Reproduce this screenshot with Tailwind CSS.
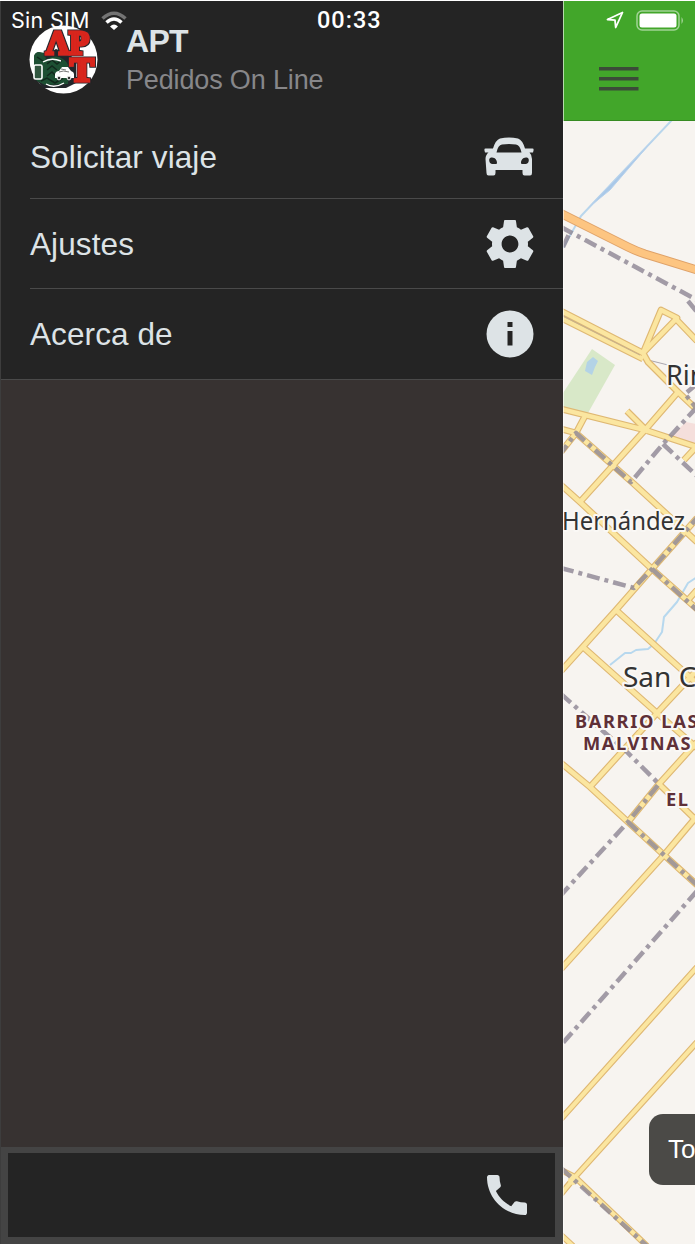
<!DOCTYPE html>
<html lang="es">
<head>
  <meta charset="UTF-8">
  <title>APT - Pedidos On Line</title>
  <script src="https://cdn.jsdelivr.net/npm/@tailwindcss/browser@4"></script>
</head>
<body class="bg-white font-['Liberation_Sans',sans-serif] overflow-hidden">

  <div class="relative flex w-[695px] h-[1244px] pt-px overflow-hidden">

    <!-- Menú lateral -->
    <aside class="w-[563px] shrink-0 flex flex-col bg-[#373231] border-l border-[#3d3d3d]">
      <div class="bg-[#242424] border-b border-[#4a4a4a] h-[379px] shrink-0">
        <header class="flex h-[115px] pl-7 pt-[23px]">
          <svg class="w-[70px] h-[70px] shrink-0" viewBox="0 0 70 70">
            <defs>
              <filter id="contorno" x="-20%" y="-20%" width="140%" height="140%">
                <feMorphology in="SourceAlpha" operator="dilate" radius="1" result="borde"/>
                <feFlood flood-color="#26282c"/>
                <feComposite in2="borde" operator="in"/>
                <feMerge><feMergeNode/><feMergeNode in="SourceGraphic"/></feMerge>
              </filter>
            </defs>
            <circle cx="34.500" cy="35.500" r="34" fill="#fff"/>
            <path d="M5 32l4-4 8 2 10-5 12 4 8 8 0 22-10 5H14l-4-5-4-3z" fill="#22262a"/>
            <path d="M5 32q1-4 5-4l6 1 1 7q9-7 17-1 7 5 6 13l-1 12-23 1-8-4-3-5z" fill="#1d4f33"/>
            <path d="M8 33l6 4M18 40l5-4 5 4 5-4M18 46l5-4 5 4M18 52l5-4 4 4M12 57l6-3 8 5 8-5" stroke="#12281d" stroke-width="1.500" fill="none"/>
            <g font-family="Liberation Serif" font-weight="700" fill="#d8251f" stroke="#d8251f" stroke-width="3" filter="url(#contorno)">
              <text x="17" y="30" font-size="33" textLength="43" lengthAdjust="spacingAndGlyphs">ΛP</text>
              <text x="41" y="57" font-size="34" textLength="24" lengthAdjust="spacingAndGlyphs">T</text>
            </g>
            <rect x="5" y="41" width="8" height="14" rx="1.500" fill="#31563f" stroke="#fff" stroke-width="1.600"/>
            <path d="M14 38q8-5 18-1M17 60q8 5 18-1" stroke="#fff" stroke-width="1.400" fill="none"/>
            <path d="M26 54v-4q1-3 4-3l3-4h6l3 4q3 1 3 3v4z" fill="#fff"/>
            <path d="M30 48q4-2 10 0M32 45l5 1" stroke="#555" stroke-width=".8" fill="none"/>
            <circle cx="30" cy="54" r="1.900" fill="#333" stroke="#fff"/><circle cx="40" cy="54" r="1.900" fill="#333" stroke="#fff"/>
          </svg>
          <div class="pl-[27px] pt-px">
            <h1 class="text-[32px] leading-[32px] tracking-[-0.7px] font-bold text-[#dde3e6]">APT</h1>
            <p class="pt-[8px] text-[27px] leading-[30px] tracking-[-0.15px] text-[#87878a] whitespace-nowrap">Pedidos On Line</p>
          </div>
        </header>

        <nav class="pl-[29px] text-[31.5px] tracking-[0.1px] text-[#dde3e6]">
          <div class="flex items-center justify-between h-[83px] pr-[29px] border-b border-[#4a4a4a]">
            <span class="pt-0.5">Solicitar viaje</span>
            <svg class="w-[50px] h-[40px]" viewBox="0 0 50 40" fill="#dde3e6">
              <path fill-rule="evenodd" d="M16 1.500Q25-.5 34 1.500Q38.500 3 41 11.500H48.500Q50 11.500 49.500 13.500L49 15.500H45.500Q48 18 48 22V36Q48 38.500 46 38.500H40.500Q38.500 38.500 38.500 36V33H11.500V36Q11.500 38.500 9.500 38.500H4.500Q2.500 38.500 2.500 36L1.500 22Q1.500 18 4.500 15.500H1L.5 13.500Q0 11.500 1.500 11.500H9Q11.500 3 16 1.500zM18 7.500Q14 8 12.500 15.500H37.500Q36 8 32 7.500Q25 6.500 18 7.500zM7 20.500C4 21.500 5 26.500 8 27H12.500C14 25.500 12 19.500 7 20.500zM43 20.500C38 19.500 36 25.500 37.500 27H42C45 26.500 46 21.500 43 20.500z"/>
            </svg>
          </div>
          <div class="flex items-center justify-between h-[90px] pr-[29px] border-b border-[#4a4a4a]">
            <span class="pt-0.5">Ajustes</span>
            <svg class="w-[48px] h-[48px]" viewBox="2.200 2 19.600 20" fill="#dde3e6">
              <path d="M19.430 12.980c.04-.32.07-.64.07-.98s-.03-.66-.07-.98l2.110-1.650c.19-.15.24-.42.12-.64l-2-3.460c-.12-.22-.39-.3-.61-.22l-2.490 1c-.52-.4-1.080-.73-1.690-.98l-.38-2.650C14.460 2.180 14.250 2 14 2h-4c-.25 0-.46.18-.49.42l-.38 2.650c-.61.25-1.170.59-1.690.98l-2.490-1c-.23-.09-.49 0-.61.22l-2 3.460c-.13.22-.07.49.12.64l2.110 1.650c-.04.32-.07.65-.07.98s.03.66.07.98l-2.110 1.650c-.19.15-.24.42-.12.64l2 3.460c.12.22.39.3.61.22l2.490-1c.52.4 1.080.73 1.690.98l.38 2.650c.03.24.24.42.49.42h4c.25 0 .46-.18.49-.42l.38-2.650c.61-.25 1.170-.59 1.690-.98l2.490 1c.23.09.49 0 .61-.22l2-3.460c.12-.22.07-.49-.12-.64l-2.110-1.650zM12 15.500c-1.930 0-3.500-1.570-3.500-3.500s1.570-3.500 3.500-3.500 3.500 1.570 3.500 3.500-1.570 3.500-3.500 3.500z"/>
            </svg>
          </div>
          <div class="flex items-center justify-between h-[90px] pr-[29px]">
            <span class="pt-0.5">Acerca de</span>
            <svg class="w-[48px] h-[48px]" viewBox="0 0 48 48">
              <circle cx="24" cy="24" r="23.500" fill="#dde3e6"/>
              <path d="M21.500 12h5v5h-5zM21.500 21h5v14.500h-5z" fill="#242424"/>
            </svg>
          </div>
        </nav>
      </div>

      <div class="mt-auto h-[97px] bg-[#242424] border-[#444444] border-l-[7px] border-t-[6px] border-r-8 border-b-[7px] flex items-center justify-end pr-[28px]">
        <svg class="w-[40px] h-[40px]" viewBox="3 3 18 18" fill="#dde3e6">
          <path d="M20.010 15.380c-1.230 0-2.420-.2-3.530-.56-.35-.12-.74-.03-1.010.24l-1.570 1.970c-2.830-1.350-5.480-3.900-6.890-6.830l1.950-1.660c.27-.28.35-.67.24-1.020-.37-1.110-.56-2.300-.56-3.530 0-.54-.45-.99-.99-.99H4.190C3.650 3 3 3.240 3 3.990 3 13.280 10.730 21 20.010 21c.71 0 .99-.63.99-1.180v-3.450c0-.54-.45-.99-.99-.99z"/>
        </svg>
      </div>
    </aside>

    <!-- Mapa -->
    <main class="relative flex-1 flex flex-col overflow-hidden">
      <div class="h-[120px] shrink-0 bg-[#42a62a] border-b border-[#368b22] pl-9 pt-[66px]">
        <svg class="w-[40px] h-[24px]" viewBox="0 0 40 24" fill="#3b4b38">
          <path d="M0 0h39.500v3.500H0zM0 10h39.500v3.500H0zM0 20h39.500v3.500H0z"/>
        </svg>
      </div>
      <svg class="w-[132px] h-[1123px]" viewBox="563 121 132 1123" fill="none" stroke-linejoin="round">
        <defs>
          <g id="calles">
            <path d="M561 311L643 353L648 362L678 392L695 408M561 318L643 359M643 353L661 310L677 318L643 353M675 318L697 341"/>
            <path d="M678 392L645 430L580 502M561 409L645 430L697 447M627 411L648 432M561 429L576 433L634 484L697 542M585 416L576 433L561 452M697 446L684 460"/>
            <path d="M561 485L580 502L652 569L697 609M697 518L652 569L616 610L561 671M616 610L692 679M583 647L657 713L697 748M697 670L657 713L590 787"/>
            <path d="M561 763L590 787L628 822L664 855L697 885M697 742L659 784L628 822M659 784L697 821M697 816L664 855L561 969M690 677L697 684M697 590L688 600"/>
          </g>
          <g id="caminos">
            <path d="M697 967L561 1119M697 1042L575 1177L561 1194M561 1170L575 1177L647 1246M561 1235L573 1246"/>
          </g>
        </defs>
        <rect x="563" y="121" width="132" height="1123" fill="#f7f4f0"/>
        <path d="M592 349L615 365L588 413L561 407V396z" fill="#d8e8c8"/>
        <path d="M593 357l5 4-3 6-3 8-7-4 2-9z" fill="#b3d3e6"/>
        <path d="M686 422L697 424V447L668 439z" fill="#f5dfdc"/>

        <!-- agua -->
        <path d="M672 120L581 216L563 248" stroke="#b9d6ec" stroke-width="2"/>
        <path d="M653 140L588 208L610 190z" fill="#a9c8e8" stroke="#b9d2ec"/>
        <path d="M697 577L688 583L677 602L664 617L662 632L654 644L648 649L636 650L631 653L625 653L610 665" stroke="#b7d8ee" stroke-width="2"/>
        <path d="M648 360L668 365" stroke="#aaa6ad" stroke-width="1"/>

        <!-- rutas -->
        <use href="#calles" stroke="#dfb873" stroke-width="6.800"/>
        <use href="#caminos" stroke="#dfb873" stroke-width="6.300"/>
        <use href="#calles" stroke="#fbe6a0" stroke-width="4.500"/>
        <use href="#caminos" stroke="#fbe6a0" stroke-width="4"/>
        <circle cx="573" cy="1180" r="5" fill="#fbe6a0"/>
        <path d="M561 315L640 355" stroke="#c9b189" stroke-width="1.200"/>
        <path d="M560 213L628 247Q636 251 645 254L697 270" stroke="#dfa269" stroke-width="9"/>
        <path d="M560 213L628 247Q636 251 645 254L697 270" stroke="#fdc581" stroke-width="7"/>

        <!-- límites -->
        <g stroke="#8f8795" stroke-opacity=".82" stroke-width="4.500" stroke-dasharray="13 5 4 5">
          <path d="M561 227L697 300M563 247L570 232M688 301L697 312"/>
          <path d="M697 407L663 444L631 482L576 433L561 453M697 384L685 394L697 409M663 444L697 476"/>
          <path d="M561 568L634 588L652 569L697 518M652 569L697 610"/>
          <path d="M561 694L604 732L625 750L659 784L628 822L561 895M628 822L664 855L697 885"/>
          <path d="M697 891L561 1045M561 1168L647 1246"/>
        </g>

        <!-- nombres -->
        <g font-family="Noto Sans" fill="#333" stroke="#faf8f5" stroke-width="4" paint-order="stroke">
          <text x="666" y="385" font-size="27">Rin</text>
          <text x="562" y="530" font-size="26" textLength="123" lengthAdjust="spacingAndGlyphs">Hernández</text>
          <text x="623" y="687" font-size="28">San C</text>
        </g>
        <g font-family="Noto Sans" font-weight="700" font-size="18.300" fill="#5f3038" stroke="#faf8f5" stroke-width="4" paint-order="stroke" letter-spacing="1.600">
          <text x="575" y="728">BARRIO LAS</text>
          <text x="583" y="750">MALVINAS</text>
          <text x="666" y="806">EL</text>
        </g>
      </svg>
      <div class="absolute left-[86px] top-[1113px] w-[120px] h-[71px] rounded-[14px] bg-[#4b4a47] text-white text-[26px] leading-[71px] pl-[19px]">To</div>
      <div class="absolute left-0 top-0 w-px h-full bg-white/60"></div>
    </main>

    <!-- Barra de estado -->
    <div class="absolute top-0 left-0 w-full h-10 flex items-center text-white font-['Inter',sans-serif]">
      <span class="pl-[11px] w-[102px] pt-px text-[21.500px] tracking-[0.3px] whitespace-nowrap">Sin SIM</span>
      <svg class="w-[26px] h-[19px] mt-px ml-[-1px]" viewBox="0 0 26 19" fill="none">
        <path d="M1.500 7.500Q13-3 24.500 7.500" stroke="#747474" stroke-width="3.500"/>
        <path d="M5.500 11.500Q13 4.500 20.500 11.500" stroke="#fff" stroke-width="3.500"/>
        <path d="M9 15.500Q13 11.500 17 15.500L13 19z" fill="#fff"/>
      </svg>
      <span class="ml-[190px] w-[68px] pt-0.5 font-['Roboto',sans-serif] text-[23.500px] tracking-[1px] font-medium whitespace-nowrap">00:33</span>
      <svg class="ml-auto w-[18px] h-[18px]" viewBox="0 0 18 18" fill="none" stroke="#fff" stroke-width="1.800" stroke-linejoin="round">
        <path d="M16.500 1.500L1.500 8.500L9 9.200L9.700 16.500z"/>
      </svg>
      <svg class="ml-3 mr-[10px] w-[49px] h-[21px]" viewBox="0 0 49 21">
        <rect x="1" y="1" width="42" height="19" rx="5" fill="none" stroke="#a1d395" stroke-width="1.500"/>
        <rect x="3.500" y="3.500" width="37" height="14" rx="2.500" fill="#fff"/>
        <path d="M45.500 7q3 3.500 0 7z" fill="#a1d395"/>
      </svg>
    </div>
  </div>

</body>
</html>
